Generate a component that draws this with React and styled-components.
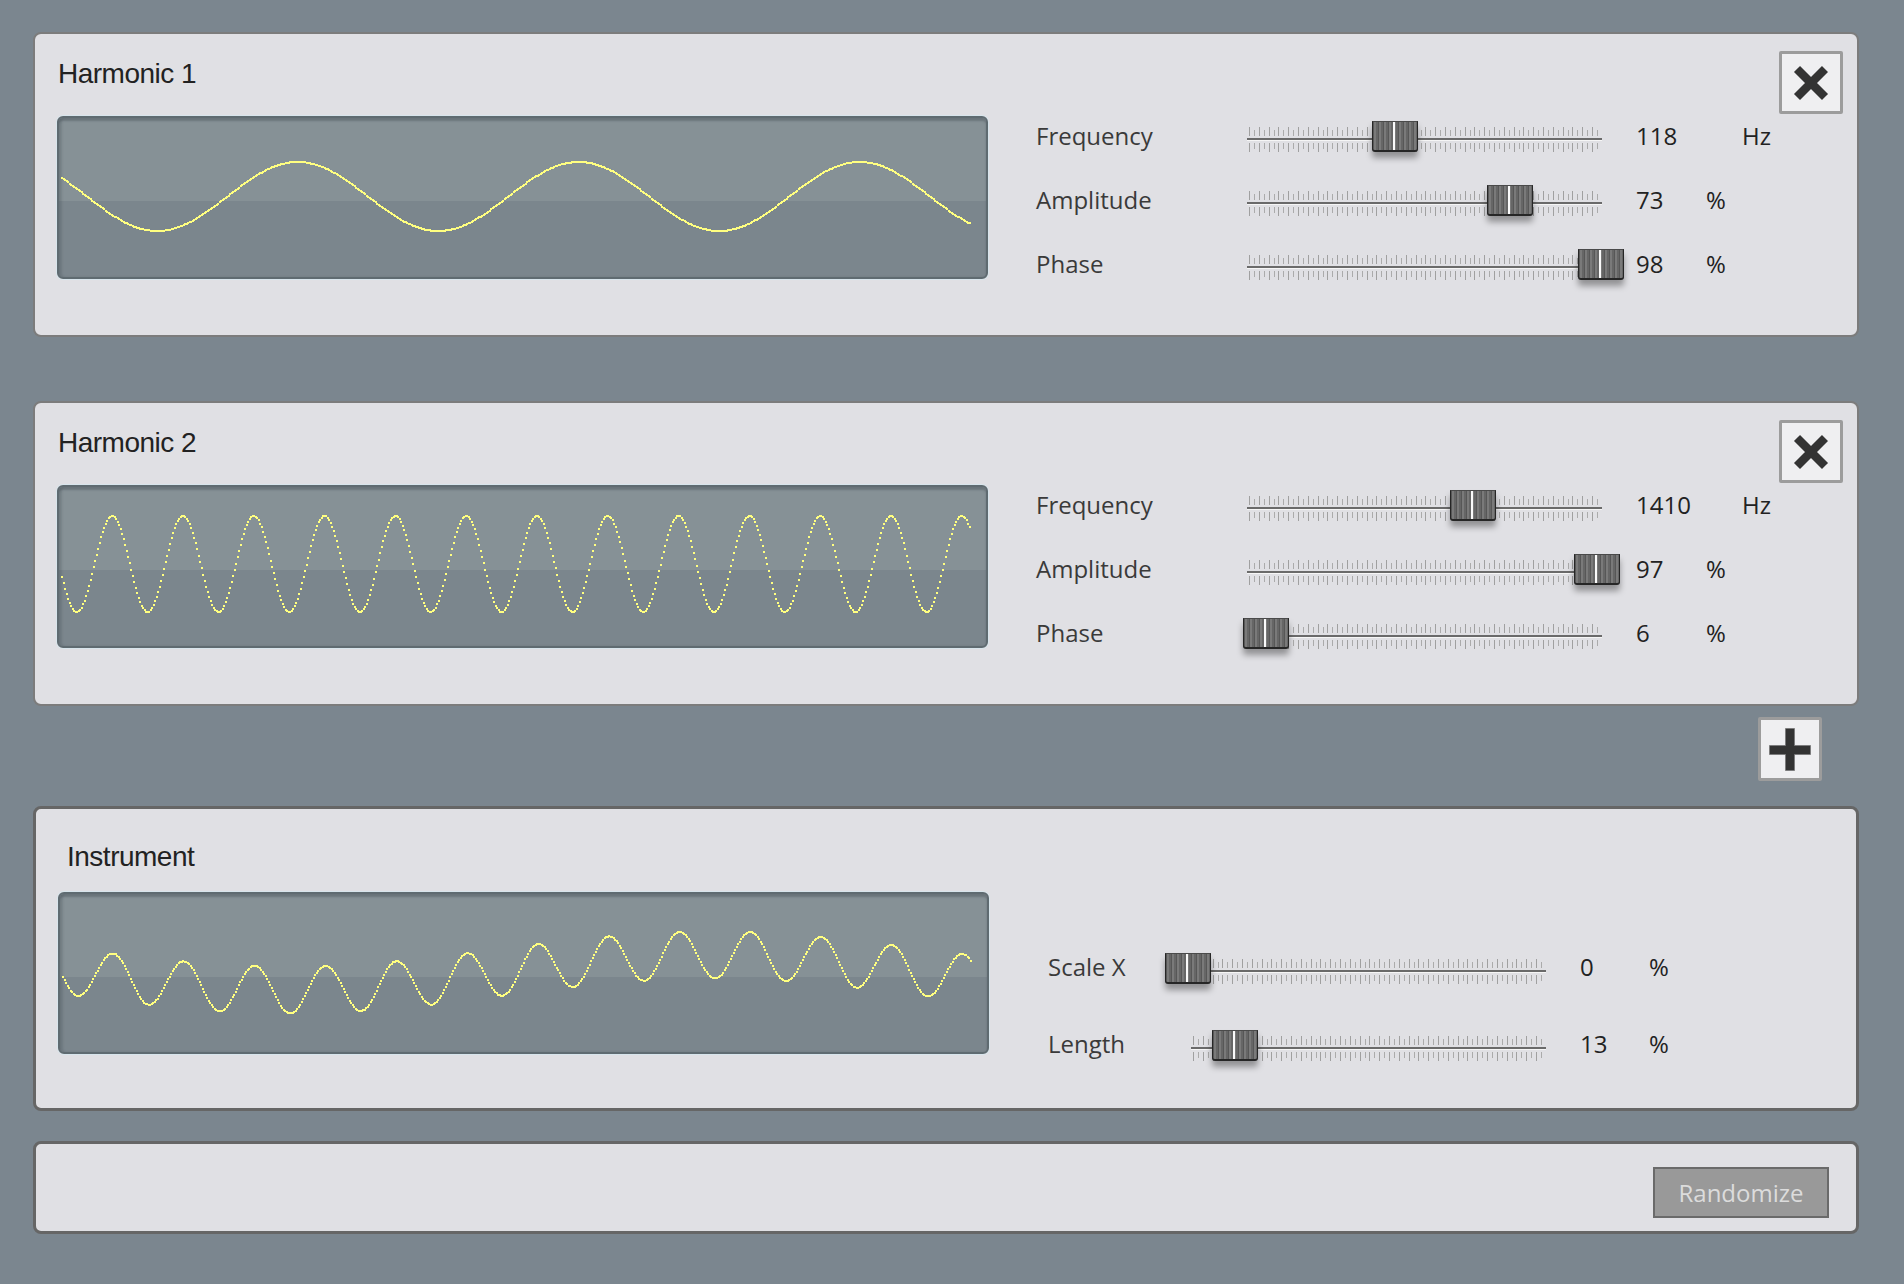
import React from "react";
import styled, { createGlobalStyle } from "styled-components";

const GlobalStyle = createGlobalStyle`
  html, body {
    margin: 0;
    padding: 0;
    background: #7b868f;
  }
  body {
    font-family: "Open Sans", "Noto Sans", sans-serif;
  }
`;

const Page = styled.div`
  display: flex;
  flex-direction: column;
  box-sizing: border-box;
  min-height: 1284px;
  padding: 32px 45px 40px 33px;
`;

const Panel = styled.section`
  display: flex;
  align-items: flex-start;
  box-sizing: border-box;
  height: ${({ $h }) => $h || 305}px;
  margin-bottom: ${({ $mb }) => $mb || 0}px;
  background: #e0e0e4;
  border: ${({ $heavy }) => ($heavy ? "3px solid #666" : "2px solid #7c7c7c")};
  border-radius: 8px;
  padding: 17px 14px 0 22px;
`;

const Footer = styled(Panel)`
  justify-content: flex-end;
  padding: 23px 27px 0 0;
`;

const LeftCol = styled.div`
  display: flex;
  flex-direction: column;
  width: 931px;
  flex: none;
`;

const Title = styled.h2`
  margin: ${({ $instr }) => ($instr ? "15px 0 19px 9px" : "7px 0 26px 1px")};
  font-family: "Liberation Sans", Arial, sans-serif;
  font-weight: normal;
  font-size: 28px;
  line-height: 32px;
  letter-spacing: -0.5px;
  color: #222;
`;

const WaveBox = styled.div`
  box-sizing: border-box;
  width: 931px;
  height: ${({ $h }) => $h || 163}px;
  border: 2px solid #5f6b71;
  border-radius: 6px;
  background: linear-gradient(to bottom, #869196 0, #869196 52.5%, #7b868d 52.5%, #7b868d 100%);
  box-shadow: 0 0 0 1px rgba(215, 230, 236, 0.9), inset 0 3px 2px rgba(60, 70, 76, 0.35),
    inset 3px 0 2px rgba(60, 70, 76, 0.2);
  overflow: hidden;

  svg {
    display: block;
  }
`;

const Controls = styled.div`
  display: flex;
  flex-direction: column;
  flex: none;
  margin: ${({ $top }) => $top}px 0 0 ${({ $left }) => $left}px;
`;

const Row = styled.div`
  display: flex;
  align-items: center;
  height: ${({ $h }) => $h}px;
`;

const Label = styled.div`
  width: ${({ $w }) => $w}px;
  font-size: 24px;
  color: #3a3a3a;
  white-space: nowrap;
`;

const Track = styled.div`
  position: relative;
  flex: none;
  width: 355px;
  height: 30px;
  margin-top: 8px;
  background:
    linear-gradient(#6a6a6a, #6a6a6a) 0 14px / 100% 2px no-repeat,
    linear-gradient(#f6f6f6, #f6f6f6) 0 16px / 100% 1px no-repeat,
    repeating-linear-gradient(to right, #a0a0a0 0 1px, transparent 1px 9.8px) 2px 3px / 352px 9px no-repeat,
    repeating-linear-gradient(to right, #ababab 0 1px, transparent 1px 9.8px) 7px 6px / 347px 6px no-repeat,
    repeating-linear-gradient(to right, #a0a0a0 0 1px, transparent 1px 9.8px) 2px 19px / 352px 9px no-repeat,
    repeating-linear-gradient(to right, #ababab 0 1px, transparent 1px 9.8px) 7px 19px / 347px 6px no-repeat;
`;

const Thumb = styled.div`
  position: absolute;
  top: -3px;
  box-sizing: border-box;
  width: 46px;
  height: 31px;
  border: 1px solid #262626;
  border-top-color: #4a4a4a;
  border-bottom-width: 2px;
  border-radius: 0 0 3px 3px;
  background:
    linear-gradient(to right, transparent 20px, #fafafa 20px, #fafafa 22px, transparent 22px),
    repeating-linear-gradient(to right, #575757 0 1px, #7a7a7a 1px 3px, #666 3px 5px),
    #6e6e6e;
  box-shadow: 0 6px 6px rgba(0, 0, 0, 0.35);
`;

const Value = styled.div`
  flex: none;
  width: ${({ $w }) => $w}px;
  margin-left: 34px;
  font-size: 24px;
  color: #222;
`;

const Unit = styled.div`
  font-size: 24px;
  color: #222;
`;

const SquareButton = styled.button`
  box-sizing: border-box;
  display: flex;
  align-items: center;
  justify-content: center;
  width: 64px;
  height: ${({ $h }) => $h || 64}px;
  padding: 0;
  margin-left: auto;
  flex: none;
  background: #efeff1;
  border: 3px solid #9c9c9c;
  border-radius: 2px;
  cursor: pointer;
`;

const AddRow = styled.div`
  display: flex;
  justify-content: flex-end;
  margin: 11px 0 25px;
  padding-right: 37px;
`;

const Randomize = styled.button`
  box-sizing: border-box;
  width: 176px;
  height: 51px;
  background: #999;
  border: 2px solid #6a6a6a;
  color: #dcdcdc;
  font-family: "Open Sans", sans-serif;
  font-size: 24px;
  cursor: pointer;
`;

const TAU = Math.PI * 2;

const harmonic1 = (x) => 80.5 + 34.5 * Math.cos((TAU * (x - 99)) / 281);
const harmonic2 = (x) => 79 - 48 * Math.cos((TAU * (x - 54)) / 70.8);
const instrument = (x) =>
  80.5 + 17.5 * Math.cos((TAU * (x - 230)) / 846) - 23.5 * Math.cos((TAU * (x - 54)) / 70.8);

// canvas-like plot: one 2px dot per sample, steep parts break up into dots
function Wave({ fn, h = 163 }) {
  const dots = [];
  for (let x = 4; x <= 912; x += 1.5) {
    const px = Math.round(x);
    dots.push(<rect key={x} x={px} y={Math.round(fn(x)) - 1} width="2" height="2" />);
  }
  return (
    <WaveBox $h={h}>
      <svg width="927" height={h - 4} viewBox={`2 2 927 ${h - 4}`} shapeRendering="crispEdges" fill="#ffff80">
        {dots}
      </svg>
    </WaveBox>
  );
}

function Slider({ pos }) {
  return (
    <Track>
      <Thumb style={{ left: -26 + pos * 364 }} />
    </Track>
  );
}

function CloseIcon() {
  return (
    <svg width="36" height="36" viewBox="0 0 36 36">
      <path d="M4 4 L32 32 M32 4 L4 32" stroke="#333" strokeWidth="8.5" />
    </svg>
  );
}

function PlusIcon() {
  return (
    <svg width="42" height="43" viewBox="0 0 42 43">
      <path d="M16.5 0.5 h9 v17 h16 v9 h-16 v16 h-9 v-16 h-16 v-9 h16 z" fill="#333" stroke="#777" strokeWidth="0.8" />
    </svg>
  );
}

const harmonics = [
  {
    name: "Harmonic 1",
    wave: harmonic1,
    rows: [
      { label: "Frequency", pos: Math.log10(118) / 5, value: "118", unit: "Hz" },
      { label: "Amplitude", pos: 0.73, value: "73", unit: "%" },
      { label: "Phase", pos: 0.98, value: "98", unit: "%" },
    ],
  },
  {
    name: "Harmonic 2",
    wave: harmonic2,
    rows: [
      { label: "Frequency", pos: Math.log10(1410) / 5, value: "1410", unit: "Hz" },
      { label: "Amplitude", pos: 0.97, value: "97", unit: "%" },
      { label: "Phase", pos: 0.06, value: "6", unit: "%" },
    ],
  },
];

export default function App() {
  return (
    <>
      <GlobalStyle />
      <Page>
        {harmonics.map((h, i) => (
          <Panel key={h.name} $mb={i === 0 ? 64 : 0}>
            <LeftCol>
              <Title>{h.name}</Title>
              <Wave fn={h.wave} />
            </LeftCol>
            <Controls $top={52} $left={48}>
              {h.rows.map((r) => (
                <Row key={r.label} $h={64}>
                  <Label $w={211}>{r.label}</Label>
                  <Slider pos={r.pos} />
                  <Value $w={r.unit === "Hz" ? 106 : 70}>{r.value}</Value>
                  <Unit>{r.unit}</Unit>
                </Row>
              ))}
            </Controls>
            <SquareButton $h={63} aria-label="Remove">
              <CloseIcon />
            </SquareButton>
          </Panel>
        ))}

        <AddRow>
          <SquareButton aria-label="Add">
            <PlusIcon />
          </SquareButton>
        </AddRow>

        <Panel $heavy $mb={30}>
          <LeftCol>
            <Title $instr>Instrument</Title>
            <Wave fn={instrument} h={162} />
          </LeftCol>
          <Controls $top={102} $left={59}>
            <Row $h={77}>
              <Label $w={143}>Scale X</Label>
              <Slider pos={0} />
              <Value $w={69}>0</Value>
              <Unit>%</Unit>
            </Row>
            <Row $h={77}>
              <Label $w={143}>Length</Label>
              <Slider pos={0.13} />
              <Value $w={69}>13</Value>
              <Unit>%</Unit>
            </Row>
          </Controls>
        </Panel>

        <Footer $heavy $h={93}>
          <Randomize>Randomize</Randomize>
        </Footer>
      </Page>
    </>
  );
}
